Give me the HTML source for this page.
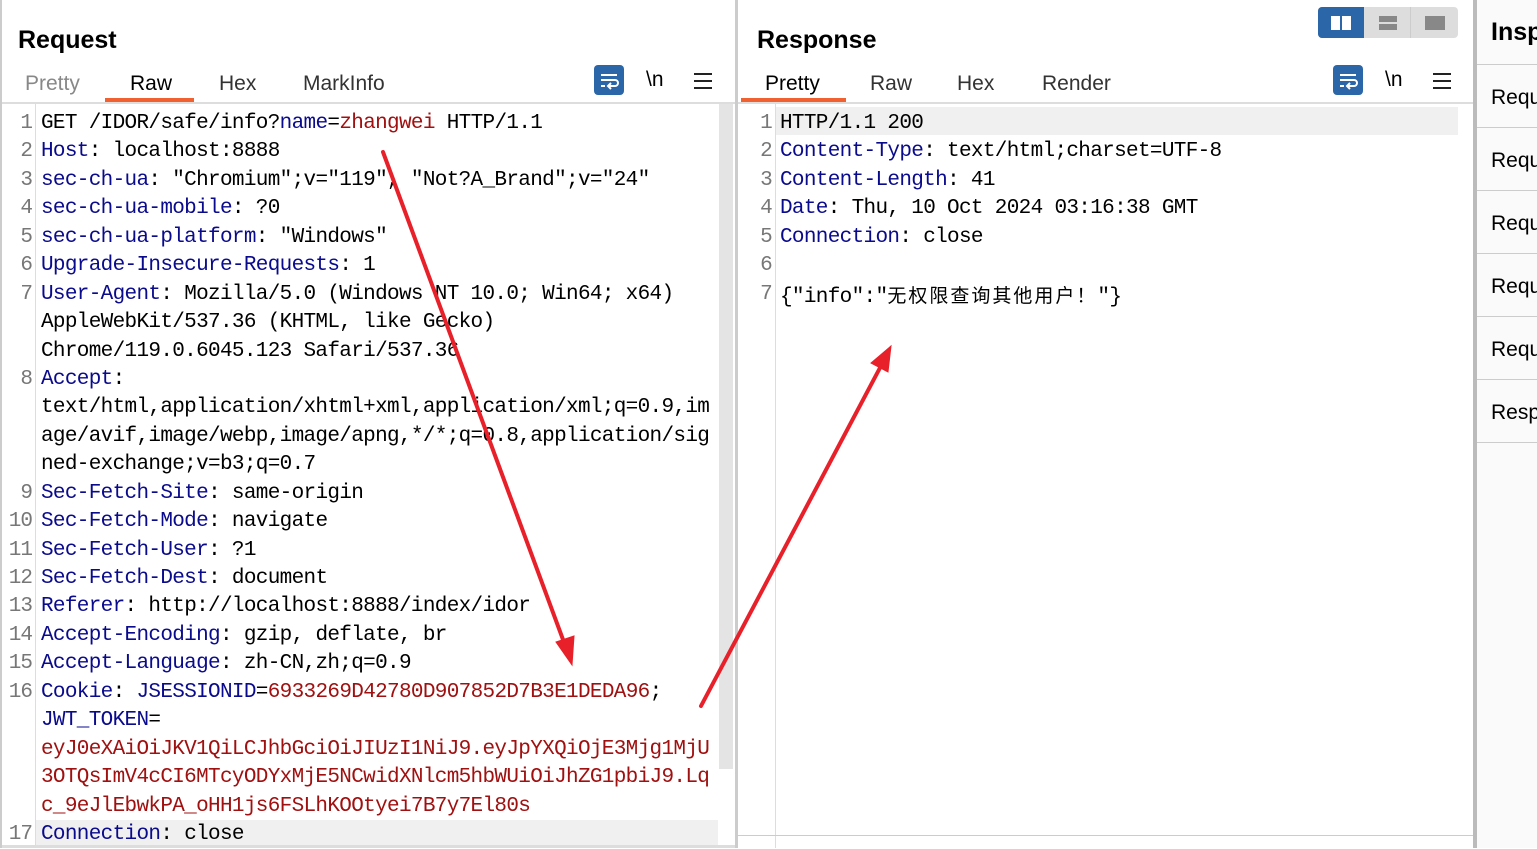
<!DOCTYPE html>
<html><head><meta charset="utf-8"><style>
*{margin:0;padding:0;box-sizing:border-box}
body{width:1537px;height:848px;overflow:hidden;background:#fff;position:relative;font-family:"Liberation Sans","Noto Sans CJK SC",sans-serif;color:#000}
.abs{position:absolute}
.h{font-weight:bold;font-size:25px}
.tab{position:absolute;top:72px;font-size:21px;color:#333}
.code{position:absolute;font-family:"Liberation Mono","Noto Sans CJK SC",monospace;font-size:21px;letter-spacing:-0.67px;line-height:28.44px;white-space:pre}
.k{color:#0a0a8c}.v{color:#a01010}.n{color:#777}
.cj{font-family:"Noto Sans CJK SC",sans-serif;font-size:19px;letter-spacing:2px}
.ic{position:absolute;width:30px;height:30px;background:#2a66a8;border-radius:4px}
</style></head><body>
<div class="abs" style="left:0;top:0;width:2px;height:848px;background:#ccc"></div>
<div class="abs" style="left:735px;top:0;width:3px;height:848px;background:#ccc"></div>
<div class="abs" style="left:1473px;top:0;width:4px;height:848px;background:#bbb"></div>
<div class="abs" style="left:1477px;top:0;width:60px;height:848px;background:#fafafa"></div>

<div class="abs h" style="left:18px;top:26px">Request</div>
<div class="tab" style="left:25px;color:#888">Pretty</div>
<div class="tab" style="left:130px;color:#000">Raw</div>
<div class="tab" style="left:219px">Hex</div>
<div class="tab" style="left:303px">MarkInfo</div>
<div class="abs" style="left:105px;top:98px;width:89px;height:4px;background:#f06030"></div>
<div class="abs" style="left:2px;top:102px;width:733px;height:2px;background:#ddd"></div>
<div class="ic" style="left:594px;top:65px"><svg width="30" height="30"><path d="M7 10h16M7 15h14a3 3 0 0 1 0 6h-6M17 18l-3 3 3 3M7 21h4" stroke="#fff" stroke-width="2" fill="none"/></svg></div>
<div class="abs" style="left:646px;top:68px;font-size:21px">\n</div>
<div class="abs" style="left:694px;top:73px;width:18px;height:2px;background:#222;box-shadow:0 7px 0 #222,0 14px 0 #222"></div>

<div class="abs" style="left:35px;top:104px;width:1px;height:744px;background:#ddd"></div>
<div class="abs" style="left:719px;top:104px;width:14px;height:665px;background:#e4e4e4"></div>
<div class="abs" style="left:36px;top:820px;width:682px;height:28px;background:#f0f0f0"></div>
<div class="code n" style="left:6px;top:110px;text-align:right;width:26px;letter-spacing:-1px">1
2
3
4
5
6
7


8



9
10
11
12
13
14
15
16




17</div>
<div class="code" style="left:41px;top:110px">GET /IDOR/safe/info?<span class="k">name</span>=<span class="v">zhangwei</span> HTTP/1.1
<span class="k">Host</span>: localhost:8888
<span class="k">sec-ch-ua</span>: "Chromium";v="119", "Not?A_Brand";v="24"
<span class="k">sec-ch-ua-mobile</span>: ?0
<span class="k">sec-ch-ua-platform</span>: "Windows"
<span class="k">Upgrade-Insecure-Requests</span>: 1
<span class="k">User-Agent</span>: Mozilla/5.0 (Windows NT 10.0; Win64; x64)
AppleWebKit/537.36 (KHTML, like Gecko)
Chrome/119.0.6045.123 Safari/537.36
<span class="k">Accept</span>:
text/html,application/xhtml+xml,application/xml;q=0.9,im
age/avif,image/webp,image/apng,*/*;q=0.8,application/sig
ned-exchange;v=b3;q=0.7
<span class="k">Sec-Fetch-Site</span>: same-origin
<span class="k">Sec-Fetch-Mode</span>: navigate
<span class="k">Sec-Fetch-User</span>: ?1
<span class="k">Sec-Fetch-Dest</span>: document
<span class="k">Referer</span>: http://localhost:8888/index/idor
<span class="k">Accept-Encoding</span>: gzip, deflate, br
<span class="k">Accept-Language</span>: zh-CN,zh;q=0.9
<span class="k">Cookie</span>: <span class="k">JSESSIONID</span>=<span class="v">6933269D42780D907852D7B3E1DEDA96</span>;
<span class="k">JWT_TOKEN</span>=
<span class="v">eyJ0eXAiOiJKV1QiLCJhbGciOiJIUzI1NiJ9.eyJpYXQiOjE3Mjg1MjU</span>
<span class="v">3OTQsImV4cCI6MTcyODYxMjE5NCwidXNlcm5hbWUiOiJhZG1pbiJ9.Lq</span>
<span class="v">c_9eJlEbwkPA_oHH1js6FSLhKOOtyei7B7y7El80s</span>
<span class="k">Connection</span>: close</div>
<div class="abs" style="left:2px;top:845px;width:733px;height:3px;background:#ddd"></div>

<div class="abs h" style="left:757px;top:26px">Response</div>
<div class="tab" style="left:765px;color:#000">Pretty</div>
<div class="tab" style="left:870px">Raw</div>
<div class="tab" style="left:957px">Hex</div>
<div class="tab" style="left:1042px">Render</div>
<div class="abs" style="left:741px;top:98px;width:105px;height:4px;background:#f06030"></div>
<div class="abs" style="left:738px;top:102px;width:735px;height:2px;background:#ddd"></div>
<div class="ic" style="left:1333px;top:65px"><svg width="30" height="30"><path d="M7 10h16M7 15h14a3 3 0 0 1 0 6h-6M17 18l-3 3 3 3M7 21h4" stroke="#fff" stroke-width="2" fill="none"/></svg></div>
<div class="abs" style="left:1385px;top:68px;font-size:21px">\n</div>
<div class="abs" style="left:1433px;top:73px;width:18px;height:2px;background:#222;box-shadow:0 7px 0 #222,0 14px 0 #222"></div>
<div class="abs" style="left:1318px;top:7px;width:140px;height:31px;background:#ddd;border-radius:4px"></div>
<div class="abs" style="left:1318px;top:7px;width:46px;height:31px;background:#2a66a8;border-radius:4px 0 0 4px"></div>
<div class="abs" style="left:1331px;top:16px;width:9px;height:14px;background:#fff"></div>
<div class="abs" style="left:1342px;top:16px;width:9px;height:14px;background:#fff"></div>
<div class="abs" style="left:1379px;top:16px;width:18px;height:6px;background:#888"></div>
<div class="abs" style="left:1379px;top:24px;width:18px;height:6px;background:#888"></div>
<div class="abs" style="left:1425px;top:16px;width:20px;height:14px;background:#888"></div>
<div class="abs" style="left:1410px;top:7px;width:1px;height:31px;background:#ccc"></div>

<div class="abs" style="left:775px;top:104px;width:1px;height:744px;background:#ddd"></div>
<div class="abs" style="left:776px;top:107px;width:682px;height:28px;background:#f0f0f0"></div>
<div class="code n" style="left:746px;top:110px;text-align:right;width:26px">1
2
3
4
5
6
7</div>
<div class="code" style="left:780px;top:110px">HTTP/1.1 200
<span class="k">Content-Type</span>: text/html;charset=UTF-8
<span class="k">Content-Length</span>: 41
<span class="k">Date</span>: Thu, 10 Oct 2024 03:16:38 GMT
<span class="k">Connection</span>: close

{"info":"<span class="cj">无权限查询其他用户！</span>"}</div>
<div class="abs" style="left:738px;top:835px;width:735px;height:1px;background:#ccc"></div>

<div class="abs h" style="left:1491px;top:18px">Inspector</div>
<div class="abs" style="left:1477px;top:64px;width:60px;height:1px;background:#ccc;box-shadow:0 63px 0 #ccc,0 126px 0 #ccc,0 189px 0 #ccc,0 252px 0 #ccc,0 315px 0 #ccc,0 378px 0 #ccc"></div>
<div class="abs" style="left:1491px;top:66px;font-size:21px;line-height:63px">Request<br>Request<br>Request<br>Request<br>Request<br>Response</div>

<svg class="abs" style="left:0;top:0" width="1537" height="848">
<g stroke="#e8202a" stroke-width="4" fill="#e8202a" stroke-linecap="round">
<line x1="383" y1="152" x2="565" y2="645"/>
<polygon points="572,665 556,642 574,636" stroke-width="1"/>
<line x1="701" y1="706" x2="882" y2="364"/>
<polygon points="891,346 888,372 871,363" stroke-width="1"/>
</g></svg>
</body></html>
